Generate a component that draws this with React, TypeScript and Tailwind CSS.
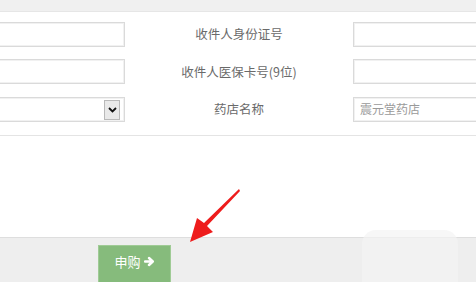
import React from "react";

const labelFont = { fontFamily: '"Noto Sans CJK SC", sans-serif' };

function TextBox({ placeholder, className = "" }: { placeholder?: string; className?: string }) {
  return (
    <div
      className={`h-[25px] border border-[#dadada] bg-white shadow-[inset_0_0_0_1px_#f1f1f1] px-[6px] flex items-center text-[12px] text-[#9a9a9a] ${className}`}
    >
      {placeholder}
    </div>
  );
}

export default function App() {
  return (
    <div
      className="relative w-[476px] h-[282px] overflow-hidden bg-white"
      style={{ fontFamily: '"Liberation Sans", "Noto Sans CJK SC", sans-serif' }}
    >
      <div className="h-[12px] bg-[#f0f0f0] border-b border-[#e6e6e6]" />

      <div className="grid grid-cols-[133px_228px_1fr] gap-y-[12px] pt-[10px] -ml-[8px] -mr-[20px]">
        <TextBox />
        <div className="flex items-center justify-center text-[12.5px] text-[#6a6a6a]" style={labelFont}>
          收件人身份证号
        </div>
        <TextBox />

        <TextBox className="mb-[1px]" />
        <div className="flex items-center justify-center text-[12.5px] text-[#6a6a6a]" style={labelFont}>
          收件人医保卡号(9位)
        </div>
        <TextBox />

        <div className="h-[25px] border border-[#dadada] bg-white shadow-[inset_0_0_0_1px_#f1f1f1] flex items-center justify-end pr-[4px]">
          <div className="w-[16px] h-[20px] bg-[#e9e9e9] border border-[#b9b9b9] flex items-center justify-center">
            <svg width="9" height="6" viewBox="0 0 9 6">
              <path d="M1 1 L4.5 4.5 L8 1" stroke="#111" strokeWidth="1.8" fill="none" />
            </svg>
          </div>
        </div>
        <div className="flex items-center justify-center text-[12.5px] text-[#6a6a6a]" style={labelFont}>
          药店名称
        </div>
        <TextBox placeholder="震元堂药店" />
      </div>

      <div className="mt-[13px] border-t border-[#e4e4e4] h-[102px]" />

      <div className="h-[46px] bg-[#eeeeee] border-t border-[#dedede] pl-[98px] pt-[7px]">
        <div className="w-[73px] h-[40px] bg-[#86bb7c] border border-[#9fcb95] flex items-start justify-center pt-[6px] gap-[3px] text-white text-[13px]">
          <span style={labelFont}>申购</span>
          <svg width="11" height="11" viewBox="0 0 11 11" className="mt-[4px]">
            <path d="M1 5.5 H8.5 M5 2 L8.8 5.5 L5 9" stroke="#fff" strokeWidth="2.4" fill="none" strokeLinejoin="round" strokeLinecap="round" />
          </svg>
        </div>
      </div>

      <div className="absolute left-[362px] top-[230px] w-[96px] h-[56px] bg-[#f3f3f3] rounded-t-[14px] opacity-70" />

      <svg className="absolute left-0 top-0" width="476" height="282" viewBox="0 0 476 282">
        <path d="M239 189 L240 191 L207 226 L213 232 L190 242 L197 218 L204 223 Z" fill="#ee1c1c" />
      </svg>
    </div>
  );
}
